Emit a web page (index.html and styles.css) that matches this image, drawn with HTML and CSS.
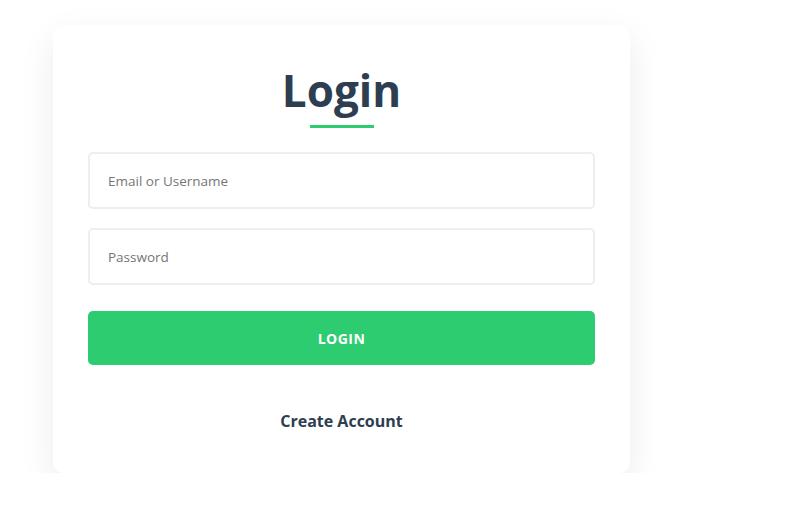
FILE: index.html
```html
<!DOCTYPE html>
<html lang="en">
<head>
    <meta charset="UTF-8">
    <title>Login</title>
    <link rel="stylesheet" href="styles.css">
</head>
<body>
    <div class="card">
        <h1 class="title">Login</h1>
        <div class="title-line"></div>
        <form class="login-form">
            <input type="text" placeholder="Email or Username">
            <input type="password" placeholder="Password">
            <button type="button">LOGIN</button>
        </form>
        <a class="create-link" href="#">Create Account</a>
    </div>
</body>
</html>
```

FILE: styles.css
```css
body {
    margin: 0;
    background: #fff;
    font-family: 'Open Sans', 'Noto Sans', sans-serif;
}

.card {
    width: 577px;
    height: 448px;
    box-sizing: border-box;
    margin: 25px 0 0 53px;
    padding: 35px 35px 0;
    background: #fff;
    border-radius: 10px;
    box-shadow: 0 12px 35px rgba(0, 0, 0, 0.08);
}

.title {
    margin: 0;
    text-align: center;
    font-size: 44px;
    line-height: 60px;
    font-weight: 700;
    color: #2c3e50;
}

.title-line {
    width: 64px;
    height: 3px;
    margin: 5px auto 0;
    background: #2ecc71;
}

.login-form {
    display: flex;
    flex-direction: column;
    gap: 19px;
    margin-top: 24px;
}

.login-form input {
    height: 57px;
    padding: 0 18px;
    border: 2px solid #eee;
    border-radius: 5px;
    box-sizing: border-box;
    font-family: inherit;
    font-size: 13.5px;
    color: #333;
    outline: none;
}

.login-form input::placeholder {
    color: #757575;
}

.login-form button {
    height: 54px;
    margin-top: 7px;
    border: none;
    border-radius: 5px;
    background: #2ecc71;
    color: #fff;
    font-family: inherit;
    font-size: 14px;
    font-weight: 700;
    letter-spacing: 0.5px;
    cursor: pointer;
}

.create-link {
    display: block;
    margin-top: 44px;
    text-align: center;
    font-size: 16px;
    line-height: 24px;
    font-weight: 700;
    color: #2c3e50;
    text-decoration: none;
}
```
